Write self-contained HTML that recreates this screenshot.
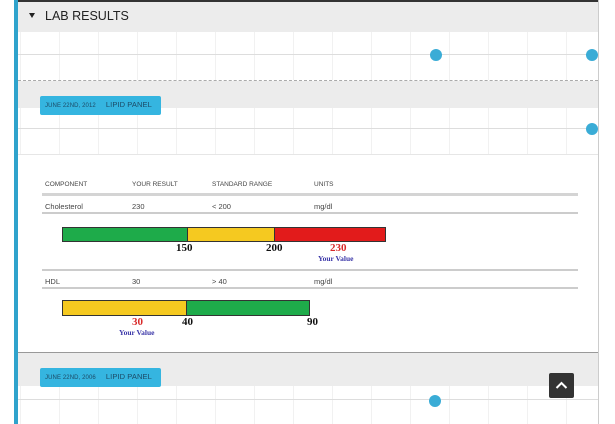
<!DOCTYPE html>
<html><head><style>
*{margin:0;padding:0;box-sizing:border-box}
body{width:615px;height:424px;background:#fff;position:relative;overflow:hidden;font-family:"Liberation Sans",sans-serif}
.a{position:absolute}
.grid{background-image:linear-gradient(90deg,#f1f1f1 1px,transparent 1px);background-size:39px 100%;background-position:2px 0}
.dot{position:absolute;width:12px;height:12px;border-radius:50%;background:#3aacd6}
.badge{position:absolute;background:#35b5e0;border-radius:2px;font-size:6px;color:#1c4a66;padding:0 5px;line-height:18px;width:121px;letter-spacing:.1px}
.badge b{font-size:7.5px;font-weight:normal;margin-left:10px}
.t{position:absolute;font-size:6.5px;color:#444}
.r{position:absolute;font-size:7.5px;color:#444}
.hl{position:absolute;height:2px;background:#ccc}
.n{position:absolute;font-family:"Liberation Serif",serif;font-weight:bold;font-size:11px;color:#111}
.yv{position:absolute;font-family:"Liberation Serif",serif;font-weight:bold;font-size:7.5px;color:#3a36a8}
</style></head><body>
<div class="a" style="left:14px;top:0;width:585px;height:2px;background:#333"></div>
<div class="a" style="left:14px;top:0;width:4px;height:424px;background:#2fa3cc"></div>
<div class="a" style="left:598px;top:0;width:1px;height:424px;background:#ccc"></div>
<div class="a" style="left:18px;top:2px;width:580px;height:30px;background:#ececec"></div>
<div class="a" style="left:29px;top:13px;width:0;height:0;border-left:3.5px solid transparent;border-right:3.5px solid transparent;border-top:5px solid #222"></div>
<div class="a" style="left:45px;top:9px;font-size:12.5px;color:#222">LAB RESULTS</div>
<div class="a grid" style="left:18px;top:32px;width:580px;height:48px"></div>
<div class="a" style="left:18px;top:54px;width:580px;height:1px;background:#ddd"></div>
<div class="dot" style="left:430px;top:49px"></div>
<div class="dot" style="left:586px;top:49px"></div>
<div class="a" style="left:18px;top:80px;width:580px;height:1px;border-top:1px dashed #aaa"></div>
<div class="a" style="left:18px;top:81px;width:580px;height:27px;background:#ececec"></div>
<div class="a grid" style="left:18px;top:108px;width:580px;height:46px"></div>
<div class="a" style="left:18px;top:128px;width:580px;height:1px;background:#ddd"></div>
<div class="dot" style="left:586px;top:123px"></div>
<div class="a" style="left:18px;top:154px;width:580px;height:1px;background:#e6e6e6"></div>
<div class="badge" style="left:40px;top:96px">JUNE 22ND, 2012<b>LIPID PANEL</b></div>

<div class="t" style="left:45px;top:181px">COMPONENT</div>
<div class="t" style="left:132px;top:181px">YOUR RESULT</div>
<div class="t" style="left:212px;top:181px">STANDARD RANGE</div>
<div class="t" style="left:314px;top:181px">UNITS</div>
<div class="hl" style="left:42px;top:193px;width:536px;height:3px;background:#d4d4d4"></div>
<div class="r" style="left:45px;top:202px">Cholesterol</div>
<div class="r" style="left:132px;top:202px">230</div>
<div class="r" style="left:212px;top:202px">&lt; 200</div>
<div class="r" style="left:314px;top:202px">mg/dl</div>
<div class="hl" style="left:42px;top:212px;width:536px"></div>
<div class="a" style="left:62px;top:227px;width:324px;height:15px;border:1px solid #333;display:flex">
<div style="width:124px;background:#1eab4a"></div><div style="width:87px;background:#f5c920;border-left:1px solid #333"></div><div style="flex:1;background:#e21b1b;border-left:1px solid #333"></div></div>
<div class="n" style="left:176px;top:242px">150</div>
<div class="n" style="left:266px;top:242px">200</div>
<div class="n" style="left:330px;top:242px;color:#d82a2a">230</div>
<div class="yv" style="left:318px;top:254px">Your Value</div>
<div class="hl" style="left:42px;top:269px;width:536px"></div>
<div class="r" style="left:45px;top:277px">HDL</div>
<div class="r" style="left:132px;top:277px">30</div>
<div class="r" style="left:212px;top:277px">&gt; 40</div>
<div class="r" style="left:314px;top:277px">mg/dl</div>
<div class="hl" style="left:42px;top:287px;width:536px"></div>
<div class="a" style="left:62px;top:300px;width:248px;height:16px;border:1px solid #333;display:flex">
<div style="width:123px;background:#f5c920"></div><div style="flex:1;background:#1eab4a;border-left:1px solid #333"></div></div>
<div class="n" style="left:132px;top:316px;color:#d82a2a">30</div>
<div class="n" style="left:182px;top:316px">40</div>
<div class="n" style="left:307px;top:316px">90</div>
<div class="yv" style="left:119px;top:328px">Your Value</div>

<div class="a" style="left:18px;top:352px;width:580px;height:1px;background:#999"></div>
<div class="a" style="left:18px;top:353px;width:580px;height:33px;background:#ececec"></div>
<div class="a grid" style="left:18px;top:386px;width:580px;height:38px"></div>
<div class="a" style="left:18px;top:399px;width:580px;height:1px;background:#ddd"></div>
<div class="dot" style="left:429px;top:395px"></div>
<div class="badge" style="left:40px;top:368px">JUNE 22ND, 2006<b>LIPID PANEL</b></div>
<div class="a" style="left:549px;top:373px;width:25px;height:25px;background:#333;border-radius:2px"></div>
<svg class="a" style="left:549px;top:373px" width="25" height="25"><path d="M7.5 15 L12.5 10 L17.5 15" stroke="#fff" stroke-width="2" fill="none"/></svg>
</body></html>
